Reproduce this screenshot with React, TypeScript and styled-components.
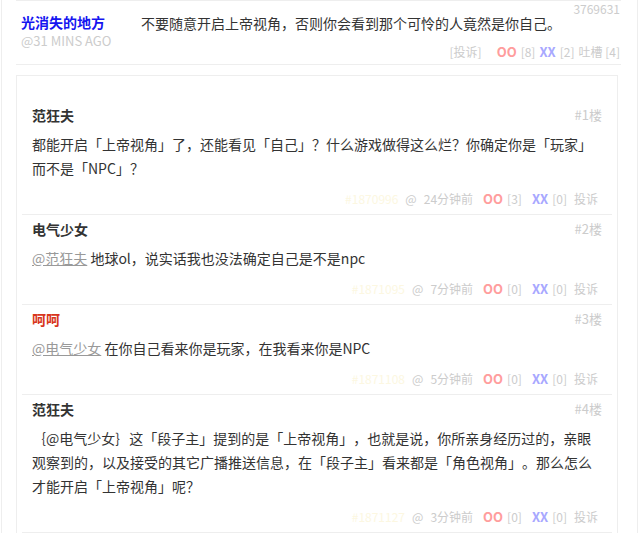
import React from "react";
import styled, { createGlobalStyle } from "styled-components";

const Global = createGlobalStyle`
  html, body { margin: 0; padding: 0; background: #fff; }
  body {
    font-family: "Noto Sans CJK SC", "Microsoft YaHei", "Liberation Sans", sans-serif;
    font-size: 14px;
    color: #333;
    text-spacing-trim: space-all;
  }
`;

const Page = styled.div`
  box-sizing: border-box;
  margin-left: 1px;
  width: 637px;
  min-height: 533px;
  border-left: 1px solid #eee;
  border-right: 1px solid #eee;
  padding-left: 14px;
`;

const Post = styled.div`
  box-sizing: border-box;
  width: 605px;
  border-top: 1px solid #eee;
  border-bottom: 1px solid #eee;
  padding: 0 1px 4px 5px;
  display: grid;
  grid-template-columns: 120px 1fr auto;
  grid-template-rows: auto auto;
`;

const Author = styled.div`
  grid-row: 1 / span 2;
  grid-column: 1;
  margin-top: 12px;
  display: flex;
  flex-direction: column;
`;

const AuthorName = styled.span`
  font-size: 14px;
  font-weight: bold;
  line-height: 18px;
  color: #1515f0;
`;

const AuthorTime = styled.span`
  margin-top: 2px;
  font-size: 13px;
  line-height: 16px;
  color: #ccc;
`;

const PostText = styled.div`
  grid-row: 1;
  grid-column: 2;
  margin-top: 12px;
  line-height: 20px;
  font-size: 14px;
  color: #333;
`;

const PostId = styled.div`
  grid-row: 1;
  grid-column: 3;
  margin-top: 1px;
  font-size: 12px;
  line-height: 14px;
  color: #ccc;
  text-align: right;
`;

const PostFooter = styled.div`
  grid-row: 2;
  grid-column: 2 / span 2;
  margin-top: 11px;
  display: flex;
  justify-content: flex-end;
  align-items: center;
  gap: 4px;
  font-size: 12px;
  line-height: 16px;
  color: #ccc;
`;

const Report = styled.span`
  margin-right: 11px;
`;

const Vote = styled.span<{ $kind: "oo" | "xx" }>`
  font-weight: bold;
  font-size: 13px;
  color: ${(p) => (p.$kind === "oo" ? "#ff9d9d" : "#a8a8ff")};
`;

const Card = styled.div`
  box-sizing: border-box;
  width: 602px;
  margin-top: 10px;
  border: 1px solid #eee;
  padding: 25px 5px 20px;
`;

const Comment = styled.div`
  border-bottom: 1px solid #eee;
  padding: 4px 10px 6px;
`;

const CommentHeader = styled.div`
  display: flex;
  justify-content: space-between;
  align-items: center;
  line-height: 20px;
`;

const CommentName = styled.span<{ $red?: boolean }>`
  font-size: 14px;
  font-weight: bold;
  color: ${(p) => (p.$red ? "#d8361c" : "#333")};
`;

const Floor = styled.span`
  font-size: 13px;
  color: #ccc;
`;

const CommentBody = styled.div`
  margin-top: 7px;
  font-size: 14px;
  line-height: 24px;
  color: #333;
`;

const Mention = styled.span`
  color: #999;
  text-decoration: underline;
`;

const CommentFooter = styled.div`
  margin-top: 10px;
  padding-right: 4px;
  display: flex;
  justify-content: flex-end;
  align-items: center;
  gap: 7px;
  font-size: 12px;
  line-height: 18px;
  color: #ccc;
`;

const CommentId = styled.span`
  color: #fcf7e1;
`;

const VoteGroup = styled.span`
  display: inline-flex;
  align-items: center;
  gap: 4px;
  margin-left: 3px;
`;

type CommentData = {
  name: string;
  red?: boolean;
  floor: number;
  body: React.ReactNode;
  id: string;
  time: string;
  oo: number;
  xx: number;
};

const comments: CommentData[] = [
  {
    name: "范狂夫",
    floor: 1,
    body: "都能开启「上帝视角」了，还能看见「自己」？什么游戏做得这么烂？你确定你是「玩家」而不是「NPC」？",
    id: "#1870996",
    time: "24分钟前",
    oo: 3,
    xx: 0,
  },
  {
    name: "电气少女",
    floor: 2,
    body: (
      <>
        <Mention>@范狂夫</Mention> 地球ol，说实话我也没法确定自己是不是npc
      </>
    ),
    id: "#1871095",
    time: "7分钟前",
    oo: 0,
    xx: 0,
  },
  {
    name: "呵呵",
    red: true,
    floor: 3,
    body: (
      <>
        <Mention>@电气少女</Mention> 在你自己看来你是玩家，在我看来你是NPC
      </>
    ),
    id: "#1871108",
    time: "5分钟前",
    oo: 0,
    xx: 0,
  },
  {
    name: "范狂夫",
    floor: 4,
    body: "｛@电气少女｝这「段子主」提到的是「上帝视角」，也就是说，你所亲身经历过的，亲眼观察到的，以及接受的其它广播推送信息，在「段子主」看来都是「角色视角」。那么怎么才能开启「上帝视角」呢？",
    id: "#1871127",
    time: "3分钟前",
    oo: 0,
    xx: 0,
  },
];

export default function App() {
  return (
    <>
      <Global />
      <Page>
        <Post>
          <Author>
            <AuthorName>光消失的地方</AuthorName>
            <AuthorTime>@31 MINS AGO</AuthorTime>
          </Author>
          <PostText>不要随意开启上帝视角，否则你会看到那个可怜的人竟然是你自己。</PostText>
          <PostId>3769631</PostId>
          <PostFooter>
            <Report>[投诉]</Report>
            <Vote $kind="oo">OO</Vote>
            <span>[8]</span>
            <Vote $kind="xx">XX</Vote>
            <span>[2]</span>
            <span>吐槽 [4]</span>
          </PostFooter>
        </Post>
        <Card>
          {comments.map((c, i) => (
            <Comment key={i}>
              <CommentHeader>
                <CommentName $red={c.red}>{c.name}</CommentName>
                <Floor>#{c.floor}楼</Floor>
              </CommentHeader>
              <CommentBody>{c.body}</CommentBody>
              <CommentFooter>
                <CommentId>{c.id}</CommentId>
                <span>@</span>
                <span>{c.time}</span>
                <VoteGroup>
                  <Vote $kind="oo">OO</Vote>
                  <span>[{c.oo}]</span>
                </VoteGroup>
                <VoteGroup>
                  <Vote $kind="xx">XX</Vote>
                  <span>[{c.xx}]</span>
                </VoteGroup>
                <span>投诉</span>
              </CommentFooter>
            </Comment>
          ))}
        </Card>
      </Page>
    </>
  );
}
